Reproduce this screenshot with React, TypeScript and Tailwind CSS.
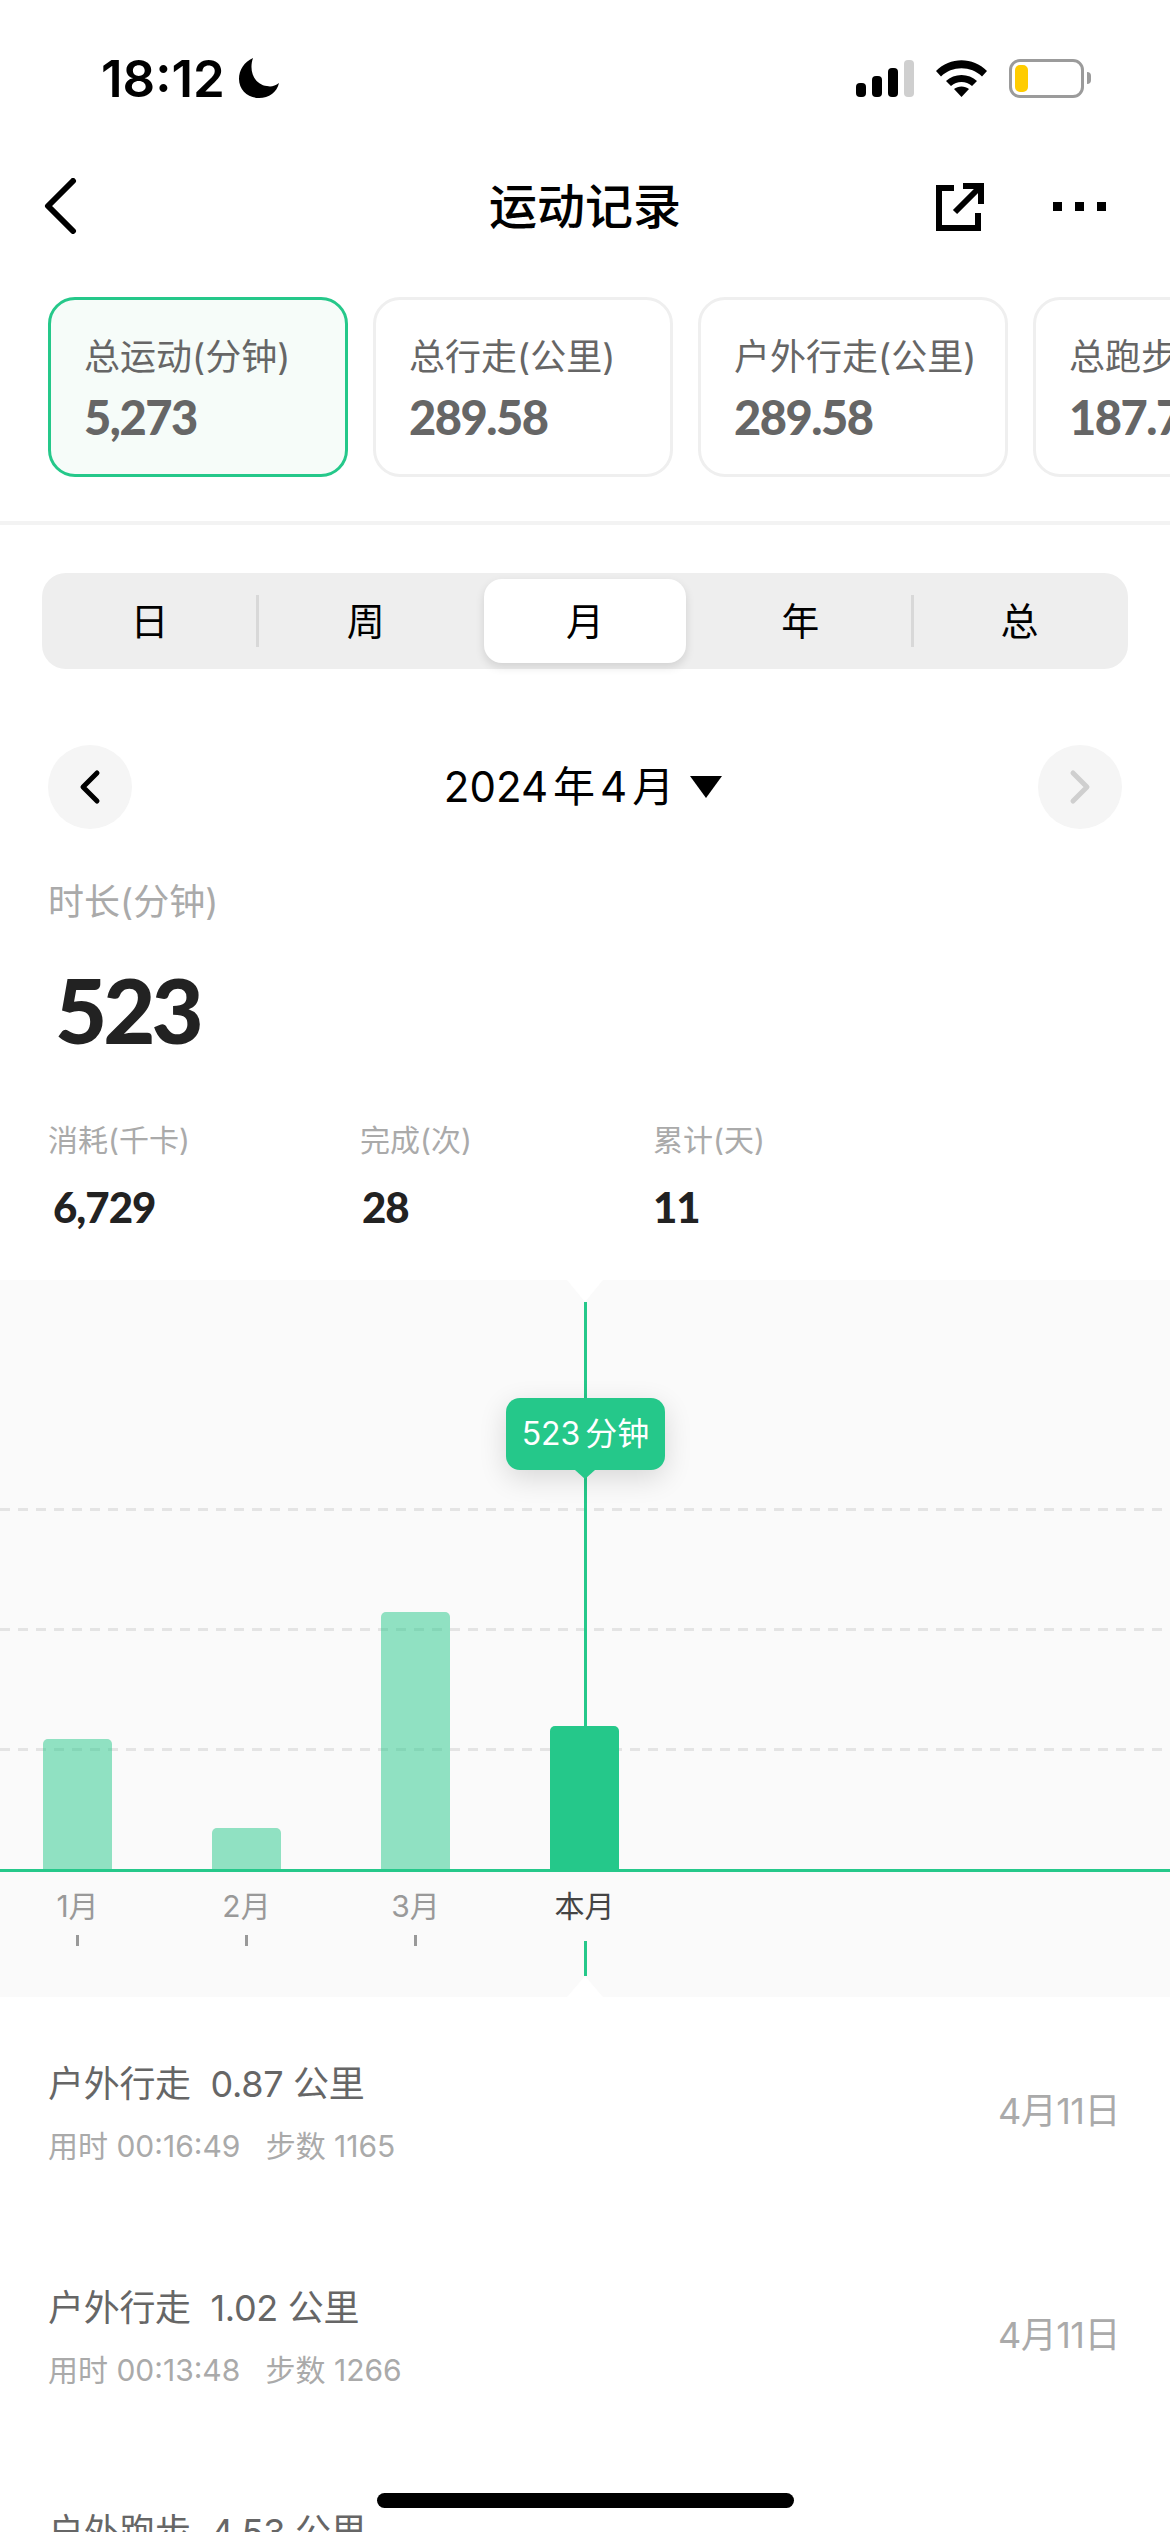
const cards = [
  { label: "总运动(分钟)", value: "5,273", width: "w-[300px]", active: true },
  { label: "总行走(公里)", value: "289.58", width: "w-[300px]" },
  { label: "户外行走(公里)", value: "289.58", width: "w-[310px]" },
  { label: "总跑步(公里)", value: "187.75", width: "w-[300px]" },
]

const stats = [
  { label: "消耗(千卡)", value: "6,729", width: "w-[312px]", pad: "pl-[5px]" },
  { label: "完成(次)", value: "28", width: "w-[293px]", pad: "pl-[2px]" },
  { label: "累计(天)", value: "11", width: "w-[200px]", pad: "" },
]

const bars = [
  { label: "1月", height: "h-[130px]" },
  { label: "2月", height: "h-[41px]" },
  { label: "3月", height: "h-[257px]" },
  { label: "本月", height: "h-[143px]", current: true },
]

const records = [
  { title: "户外行走", km: "0.87 公里", time: "00:16:49", steps: "1165" },
  { title: "户外行走", km: "1.02 公里", time: "00:13:48", steps: "1266" },
  { title: "户外跑步", km: "4.53 公里", time: "00:29:12", steps: "4530" },
]

function StatusBar() {
  return (
    <div className="h-[156px] flex items-center justify-between pl-[101px] pr-[79px]">
      <div className="flex items-center gap-[14px]">
        <span className="text-[51px] leading-none font-semibold text-black">18:12</span>
        <svg width="40" height="40" viewBox="0 0 40 40">
          <path d="M14 0 C5 4 0 12 0 21 C0 32 9 40 20 40 C30 40 38 34 40 25 C36 28 32 29 28 28 C17 27 9 15 14 0 Z" fill="#000" />
        </svg>
      </div>
      <div className="flex items-center gap-[22px]">
        <svg width="58" height="37" viewBox="0 0 58 37">
          <rect x="0" y="23" width="10" height="14" rx="4" fill="#000" />
          <rect x="16" y="16" width="10" height="21" rx="4" fill="#000" />
          <rect x="32" y="8" width="10" height="29" rx="4" fill="#000" />
          <rect x="48" y="0" width="10" height="37" rx="4" fill="#cfcfcf" />
        </svg>
        <svg width="51" height="37" viewBox="0 0 51 37">
          <path d="M0 11 C14 -3.5 37 -3.5 51 11 L46 16.5 C35 5.5 16 5.5 5 16.5 Z" fill="#000" />
          <path d="M10 21 C18 13 33 13 41 21 L36 26 C30 20.5 21 20.5 15 26 Z" fill="#000" />
          <path d="M18 29 C22 25.5 29 25.5 33 29 L25.5 37 Z" fill="#000" />
        </svg>
        <div className="flex items-center gap-[3px]">
          <div className="w-[75px] h-[39px] rounded-[11px] border-[3px] border-[#9b9b9b] p-[3px]">
            <div className="w-[13px] h-full rounded-[5px] bg-[#ffcc00]" />
          </div>
          <div className="w-[4px] h-[12px] rounded-r-full bg-[#9b9b9b]" />
        </div>
      </div>
    </div>
  )
}

function NavBar() {
  return (
    <div className="relative h-[102px] flex items-center justify-center">
      <svg className="absolute left-[43px] top-[22px]" width="34" height="56" viewBox="0 0 34 56">
        <path d="M30 3 L5 28 L30 53" fill="none" stroke="#000" strokeWidth="6" strokeLinecap="round" strokeLinejoin="round" />
      </svg>
      <span className="text-[48px] font-medium text-black leading-none">运动记录</span>
      <svg className="absolute left-[936px] top-[27px]" width="48" height="48" viewBox="0 0 48 48">
        <path d="M18 5 H3 V45 H42 V30" fill="none" stroke="#000" strokeWidth="6" />
        <path d="M27 3 H45 V21" fill="none" stroke="#000" strokeWidth="6" />
        <path d="M44 4 L19 29" fill="none" stroke="#000" strokeWidth="6" />
      </svg>
      <div className="absolute left-[1053px] top-[46px] flex gap-[13px]">
        <div className="w-[9px] h-[9px] bg-black" />
        <div className="w-[9px] h-[9px] bg-black" />
        <div className="w-[9px] h-[9px] bg-black" />
      </div>
    </div>
  )
}

function MetricCards() {
  return (
    <div className="mt-[39px] flex gap-[25px] pl-[48px] overflow-hidden">
      {cards.map((card) => (
        <div
          key={card.label}
          className={`${card.width} h-[180px] shrink-0 rounded-[27px] border-[3px] pl-[33px] pt-[32px] ${
            card.active ? "border-[#25c88a] bg-[#f6fcf9]" : "border-[#efefef] bg-white"
          }`}
        >
          <div className="text-[36px] leading-[50px] text-[#666] whitespace-nowrap">{card.label}</div>
          <div className="mt-[5px] text-[47px] leading-[60px] font-black font-['Lato',sans-serif] text-[#666] tracking-[-1.5px]">{card.value}</div>
        </div>
      ))}
    </div>
  )
}

function PeriodTabs() {
  return (
    <div className="mx-[42px] mt-[48px] h-[96px] rounded-[24px] bg-[#eeeeee] grid grid-cols-5 text-[38px] text-black">
      <div className="flex items-center justify-center relative pr-[2px]">
        日
        <div className="absolute right-0 top-[22px] h-[52px] w-[3px] bg-[#d8d8d8]" />
      </div>
      <div className="flex items-center justify-center pr-[4px]">周</div>
      <div className="flex items-center justify-center m-[6px_8px] rounded-[18px] bg-white shadow-[0_4px_10px_rgba(0,0,0,0.12)]">月</div>
      <div className="flex items-center justify-center pr-[4px]">年</div>
      <div className="flex items-center justify-center relative">
        总
        <div className="absolute left-0 top-[22px] h-[52px] w-[3px] bg-[#d8d8d8]" />
      </div>
    </div>
  )
}

function MonthPicker() {
  return (
    <div className="mt-[76px] px-[48px] flex items-center justify-between">
      <div className="w-[84px] h-[84px] rounded-full bg-[#f5f5f5] flex items-center justify-center">
        <svg width="24" height="36" viewBox="0 0 24 36">
          <path d="M19 4 L5 18 L19 32" fill="none" stroke="#000" strokeWidth="5" strokeLinecap="round" strokeLinejoin="round" />
        </svg>
      </div>
      <div className="flex items-center gap-[16px] text-[42px] leading-none text-black mr-[4px]">
        <span>
          2024<span className="mx-[5px]">年</span>4<span className="ml-[5px]">月</span>
        </span>
        <svg width="32" height="22" viewBox="0 0 32 22">
          <path d="M0 0 H32 L16 22 Z" fill="#000" />
        </svg>
      </div>
      <div className="w-[84px] h-[84px] rounded-full bg-[#f5f5f5] flex items-center justify-center">
        <svg width="24" height="36" viewBox="0 0 24 36">
          <path d="M5 4 L19 18 L5 32" fill="none" stroke="#cfcfcf" strokeWidth="5" strokeLinecap="round" strokeLinejoin="round" />
        </svg>
      </div>
    </div>
  )
}

function Summary() {
  return (
    <div className="pl-[48px]">
      <div className="mt-[48px] text-[36px] leading-[50px] text-[#aaa]">时长(分钟)</div>
      <div className="mt-[37px] pl-[7px] text-[90px] leading-[90px] font-black font-['Lato',sans-serif] text-[#222] tracking-[-4px]">523</div>
      <div className="mt-[65px] flex">
        {stats.map((s) => (
          <div key={s.label} className={s.width}>
            <div className="text-[30px] leading-[42px] text-[#aaa]">{s.label}</div>
            <div className={`${s.pad} mt-[21px] text-[42px] leading-[50px] font-black font-['Lato',sans-serif] text-[#222] tracking-[-1px]`}>{s.value}</div>
          </div>
        ))}
      </div>
    </div>
  )
}

function Chart() {
  return (
    <div className="relative mt-[48px] h-[717px] bg-[#fafafa] overflow-hidden">
      {/* grid lines */}
      <div className="absolute left-0 right-0 top-[228px] h-[3px] bg-[repeating-linear-gradient(90deg,#e4e4e4_0_10px,transparent_10px_18px)]" />
      <div className="absolute left-0 right-0 top-[348px] h-[3px] bg-[repeating-linear-gradient(90deg,#e4e4e4_0_10px,transparent_10px_18px)]" />
      <div className="absolute left-0 right-0 top-[468px] h-[3px] bg-[repeating-linear-gradient(90deg,#e4e4e4_0_10px,transparent_10px_18px)]" />

      <div className="relative h-[589px] flex items-end gap-[100px] pl-[43px]">
        {bars.map((b) => (
          <div key={b.label} className={`${b.height} w-[69px] rounded-t-[5px] ${b.current ? "bg-[#25c88a]" : "bg-[#25c88a]/50"}`} />
        ))}
      </div>
      <div className="relative h-[3px] bg-[#25c88a]" />
      <div className="relative flex gap-[100px] pl-[43px]">
        {bars.map((b) => (
          <div key={b.label} className="w-[69px] flex flex-col items-center">
            <div className={`mt-[13px] text-[30px] leading-[42px] whitespace-nowrap ${b.current ? "text-[#444]" : "text-[#999]"}`}>{b.label}</div>
            {!b.current && <div className="mt-[8px] w-[3px] h-[11px] bg-[#999]" />}
          </div>
        ))}
      </div>

      {/* crosshair and tooltip */}
      <div className="absolute left-[584px] top-[22px] w-[3px] h-[547px] bg-[#25c88a]" />
      <div className="absolute left-[584px] top-[661px] w-[3px] h-[35px] bg-[#25c88a]" />
      <div className="absolute left-[506px] top-[118px] w-[159px] h-[72px] rounded-[14px] bg-[#25c88a] shadow-[0_8px_28px_rgba(0,0,0,0.14)] flex items-center justify-center text-[32px] text-white whitespace-nowrap">
        523<span className="ml-[5px]">分钟</span>
      </div>
      <svg className="absolute left-[575px] top-[190px]" width="20" height="9" viewBox="0 0 20 9">
        <path d="M0 0 H20 L10 9 Z" fill="#25c88a" />
      </svg>
      <svg className="absolute left-[567px] top-0" width="36" height="22" viewBox="0 0 36 22">
        <path d="M0 0 H36 L18 22 Z" fill="#fff" />
      </svg>
      <svg className="absolute left-[567px] bottom-0" width="36" height="21" viewBox="0 0 36 21">
        <path d="M0 21 H36 L18 0 Z" fill="#fff" />
      </svg>
    </div>
  )
}

function RecordList() {
  return (
    <div className="px-[48px] pt-[63px]">
      {records.map((r, i) => (
        <div key={i} className="h-[224px] flex justify-between">
          <div>
            <div className="text-[36px] leading-[48px] text-[#666] whitespace-pre tracking-[-0.3px]">{`${r.title}  ${r.km}`}</div>
            <div className="mt-[17px] text-[30px] leading-[42px] text-[#aaa] whitespace-pre">{`用时 ${r.time}   步数 ${r.steps}`}</div>
          </div>
          <div className="mt-[27px] mr-[2px] text-[36px] leading-[48px] text-[#aaa] tracking-[-0.5px]">4月11日</div>
        </div>
      ))}
    </div>
  )
}

export default function App() {
  return (
    <div className="relative w-[1170px] h-[2532px] overflow-hidden bg-white font-['Inter','Noto_Sans_CJK_SC',sans-serif]">
      <StatusBar />
      <NavBar />
      <MetricCards />
      <div className="mt-[44px] h-[4px] bg-[#f3f3f3]" />
      <PeriodTabs />
      <MonthPicker />
      <Summary />
      <Chart />
      <RecordList />
      <div className="absolute left-[377px] top-[2493px] w-[417px] h-[15px] rounded-full bg-black" />
    </div>
  )
}
